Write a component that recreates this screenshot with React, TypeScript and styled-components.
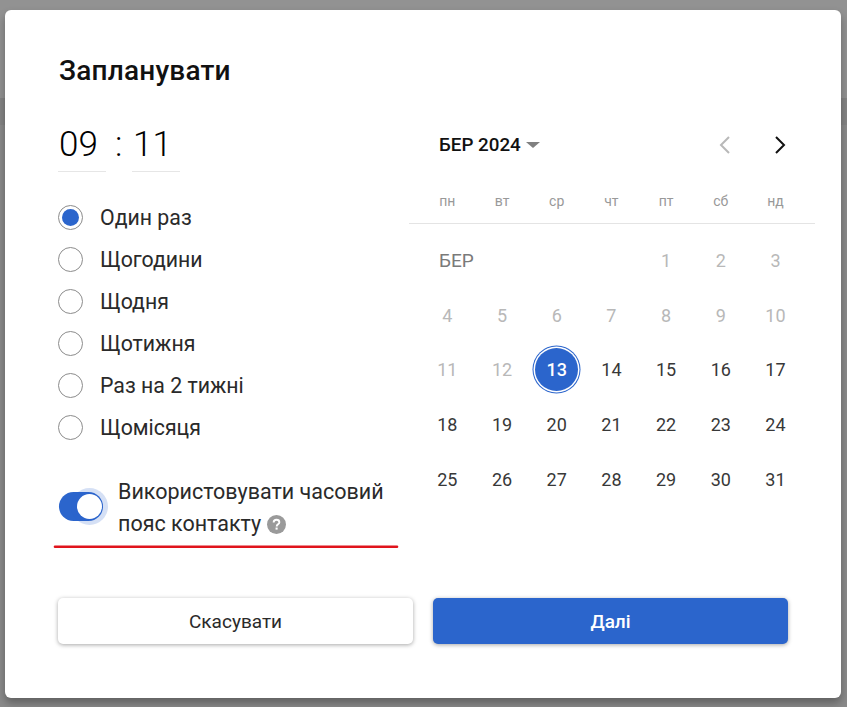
import { FC } from 'react'
import styled, { createGlobalStyle } from 'styled-components'

const GlobalStyle = createGlobalStyle`
  html, body {
    margin: 0;
    padding: 0;
    height: 100%;
    overflow: hidden;
    font-family: Roboto, 'Liberation Sans', sans-serif;
  }
`

const Backdrop = styled.div`
  position: relative;
  width: 847px;
  height: 707px;
  overflow: hidden;
  background: linear-gradient(#929292 0 98px, #848484 98px 125px, #8a8a8a 125px);
  padding: 10px 6px 9px 5px;
  box-sizing: border-box;
`

const Modal = styled.div`
  position: relative;
  height: 688px;
  background: #fff;
  border-radius: 6px;
  padding: 44px 53px 0 53px;
  box-sizing: border-box;
  display: flex;
  flex-direction: column;
  box-shadow: 0 5px 8px rgba(0, 0, 0, 0.3);
`

const Title = styled.h1`
  margin: 0;
  padding-left: 1px;
  font-size: 28px;
  line-height: 34px;
  font-weight: 500;
  letter-spacing: 0.2px;
  color: #111;
`

const Columns = styled.div`
  display: flex;
  margin-top: 36px;
`

const LeftColumn = styled.div`
  flex: none;
  width: 351px;
`

const TimeRow = styled.div`
  display: flex;
  align-items: flex-start;
`

const TimeField = styled.div`
  width: 48px;
  height: 48px;
  padding-left: 1px;
  box-sizing: border-box;
  border-bottom: 1px solid #e6e6e6;
  font-size: 35px;
  line-height: 41px;
  font-weight: 300;
  color: #000;
`

const TimeColon = styled.div`
  width: 26px;
  padding-left: 9px;
  box-sizing: border-box;
  font-size: 35px;
  line-height: 41px;
  font-weight: 300;
  color: #000;
`

const RadioList = styled.div`
  display: flex;
  flex-direction: column;
  gap: 12px;
  margin-top: 30px;
`

const RadioRow = styled.div`
  display: flex;
  align-items: center;
  height: 30px;
  font-size: 21.3px;
  color: #2a2a2a;
`

const RadioCircle = styled.span<{ $checked?: boolean }>`
  width: 25px;
  height: 25px;
  border-radius: 50%;
  border: 1px solid #8c8c8c;
  box-sizing: border-box;
  margin-right: 17px;
  display: flex;
  align-items: center;
  justify-content: center;
  &::after {
    content: '';
    width: 17px;
    height: 17px;
    border-radius: 50%;
    background: ${({ $checked }) => ($checked ? '#2b65cc' : 'transparent')};
  }
`

const ZoneRow = styled.div`
  display: flex;
  margin-top: 34px;
`

const Toggle = styled.span`
  position: relative;
  flex: none;
  width: 44px;
  height: 29px;
  margin: 16px 15px 0 1px;
  background: #2b65cc;
  border-radius: 15px;
`

const ToggleKnob = styled.span`
  position: absolute;
  right: 1px;
  top: 2px;
  width: 25px;
  height: 25px;
  border-radius: 50%;
  background: #fff;
  box-shadow: 0 0 0 6px rgba(43, 101, 204, 0.2);
`

const ZoneLabel = styled.div`
  font-size: 21.5px;
  line-height: 32px;
  color: #2a2a2a;
  width: 285px;
`

const HelpIcon = styled.svg`
  width: 19px;
  height: 19px;
  vertical-align: -3px;
  margin-left: 6px;
`

const RedLine = styled.svg`
  position: absolute;
  left: 48px;
  top: 534px;
  width: 346px;
  height: 6px;
`

const Calendar = styled.div`
  flex: none;
  width: 406px;
`

const CalendarHeader = styled.div`
  display: flex;
  align-items: center;
  justify-content: space-between;
  height: 30px;
  margin-top: 6px;
  padding: 0 28px 0 30px;
`

const MonthButton = styled.div`
  display: flex;
  align-items: center;
  gap: 5px;
  font-size: 18.8px;
  font-weight: 500;
  color: #111;
`

const Caret = styled.span`
  width: 0;
  height: 0;
  border-left: 7px solid transparent;
  border-right: 7px solid transparent;
  border-top: 6px solid #808080;
`

const NavGroup = styled.div`
  display: flex;
  gap: 41px;
`

const WeekHeader = styled.div`
  display: grid;
  grid-template-columns: repeat(7, 54.7px);
  padding-left: 11px;
  height: 44px;
  margin-top: 19px;
  align-items: center;
  border-bottom: 1px solid #e4e4e4;
  font-size: 14px;
  color: #999;
  text-align: center;
`

const DayGrid = styled.div`
  display: grid;
  grid-template-columns: repeat(7, 54.7px);
  grid-auto-rows: 54.8px;
  padding-left: 11px;
  margin-top: 9px;
`

const DayCell = styled.div<{ $muted?: boolean }>`
  display: flex;
  align-items: center;
  justify-content: center;
  font-size: 18px;
  color: ${({ $muted }) => ($muted ? '#b8b8b8' : '#383838')};
`

const MonthLabel = styled(DayCell)`
  grid-column: span 4;
  justify-content: flex-start;
  padding-left: 19px;
  font-size: 19px;
  color: #7a7a7a;
`

const SelectedDay = styled.span`
  width: 43px;
  height: 43px;
  border-radius: 50%;
  background: #2b65cc;
  color: #fff;
  font-weight: 500;
  display: flex;
  align-items: center;
  justify-content: center;
  box-shadow: 0 0 0 1.5px #fff, 0 0 0 2.5px #2b65cc;
`

const Footer = styled.div`
  display: flex;
  gap: 20px;
  margin-top: 58px;
`

const Button = styled.button<{ $primary?: boolean }>`
  flex: 0 0 355px;
  height: 46px;
  border: none;
  border-radius: 5px;
  font-family: inherit;
  font-size: 19px;
  font-weight: ${({ $primary }) => ($primary ? 500 : 400)};
  color: ${({ $primary }) => ($primary ? '#fff' : '#2a2a2a')};
  background: ${({ $primary }) => ($primary ? '#2b65cc' : '#fff')};
  box-shadow: 0 1px 4px rgba(0, 0, 0, 0.35);
`

const options = ['Один раз', 'Щогодини', 'Щодня', 'Щотижня', 'Раз на 2 тижні', 'Щомісяця']
const weekDays = ['пн', 'вт', 'ср', 'чт', 'пт', 'сб', 'нд']
const days = Array.from({ length: 31 }, (_, i) => i + 1)

const Chevron: FC<{ left?: boolean; color: string }> = ({ left, color }) => (
  <svg width="14" height="20" viewBox="0 0 14 20" fill="none">
    <path
      d={left ? 'M11 2 3 10l8 8' : 'M3 2l8 8-8 8'}
      stroke={color}
      strokeWidth="2"
    />
  </svg>
)

const App: FC = () => {
  return (
    <Backdrop>
      <GlobalStyle />
      <Modal>
        <Title>Запланувати</Title>
        <Columns>
          <LeftColumn>
            <TimeRow>
              <TimeField>09</TimeField>
              <TimeColon>:</TimeColon>
              <TimeField>11</TimeField>
            </TimeRow>
            <RadioList>
              {options.map((option, index) => (
                <RadioRow key={option}>
                  <RadioCircle $checked={index === 0} />
                  {option}
                </RadioRow>
              ))}
            </RadioList>
            <ZoneRow>
              <Toggle>
                <ToggleKnob />
              </Toggle>
              <ZoneLabel>
                Використовувати часовий пояс контакту
                <HelpIcon viewBox="0 0 20 20">
                  <circle cx="10" cy="10" r="10" fill="#9a9a9a" />
                  <path
                    d="M7 7.8C7 6 8.3 5 10 5s3 1 3 2.6c0 2.2-2.8 2.2-2.8 4.4"
                    fill="none"
                    stroke="#fff"
                    strokeWidth="2"
                  />
                  <rect x="9" y="13.2" width="2.2" height="2.2" fill="#fff" />
                </HelpIcon>
              </ZoneLabel>
            </ZoneRow>
          </LeftColumn>
          <Calendar>
            <CalendarHeader>
              <MonthButton>
                БЕР 2024
                <Caret />
              </MonthButton>
              <NavGroup>
                <Chevron left color="#b8b8b8" />
                <Chevron color="#111" />
              </NavGroup>
            </CalendarHeader>
            <WeekHeader>
              {weekDays.map((day) => (
                <span key={day}>{day}</span>
              ))}
            </WeekHeader>
            <DayGrid>
              <MonthLabel>БЕР</MonthLabel>
              {days.map((day) => (
                <DayCell key={day} $muted={day < 13}>
                  {day === 13 ? <SelectedDay>{day}</SelectedDay> : day}
                </DayCell>
              ))}
            </DayGrid>
          </Calendar>
        </Columns>
        <Footer>
          <Button>Скасувати</Button>
          <Button $primary>Далі</Button>
        </Footer>
        <RedLine viewBox="0 0 346 6">
          <path d="M2 2.7L344 2.7" fill="none" stroke="#e0141c" strokeWidth="2.6" strokeLinecap="round" />
        </RedLine>
      </Modal>
    </Backdrop>
  )
}

export default App
